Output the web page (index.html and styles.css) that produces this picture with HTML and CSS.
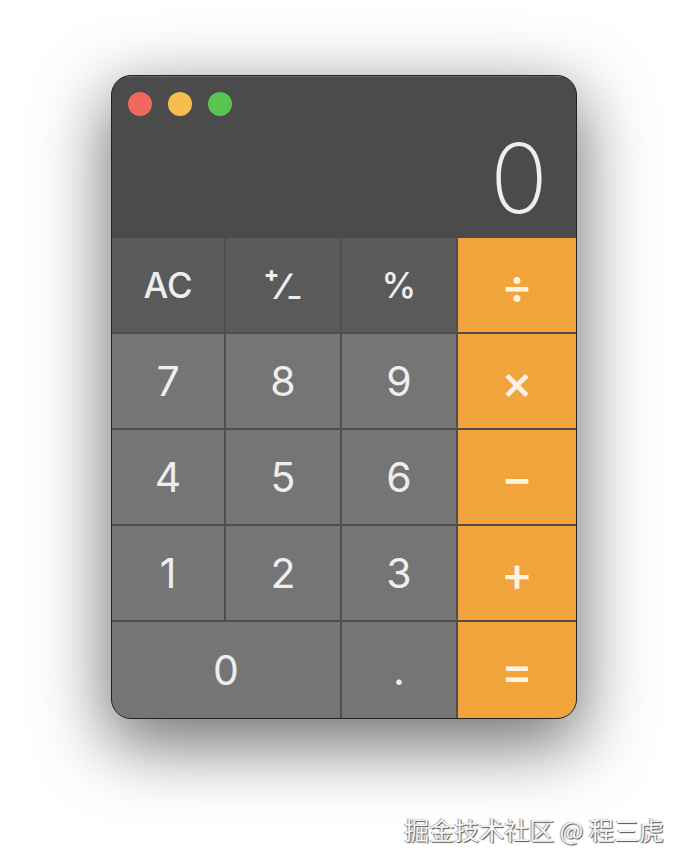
FILE: index.html
```html
<!DOCTYPE html>
<html lang="en">
<head>
    <meta charset="UTF-8">
    <meta name="viewport" content="width=device-width, initial-scale=1.0">
    <title>Calculator</title>
    <link rel="stylesheet" href="styles.css">
</head>
<body>

<div class="calculator">
    <div class="top">
        <div class="lights">
            <span class="light red"></span>
            <span class="light yellow"></span>
            <span class="light green"></span>
        </div>
        <div class="display">0</div>
    </div>
    <div class="keys">
        <button class="key func">AC</button>
        <button class="key func sign">⁺∕₋</button>
        <button class="key func">%</button>
        <button class="key op">÷</button>
        <button class="key">7</button>
        <button class="key">8</button>
        <button class="key">9</button>
        <button class="key op">×</button>
        <button class="key">4</button>
        <button class="key">5</button>
        <button class="key">6</button>
        <button class="key op">−</button>
        <button class="key">1</button>
        <button class="key">2</button>
        <button class="key">3</button>
        <button class="key op">+</button>
        <button class="key zero">0</button>
        <button class="key">.</button>
        <button class="key op">=</button>
    </div>
</div>

<div class="watermark">掘金技术社区 @ 程三虎</div>

</body>
</html>
```

FILE: styles.css
```css
body {
    margin: 0;
    padding: 75px 0 0 111px;
    height: 866px;
    box-sizing: border-box;
    overflow: hidden;
    background-color: #fff;
    font-family: Inter, "Liberation Sans", sans-serif;
}
.calculator {
    width: 466px;
    height: 644px;
    box-sizing: border-box;
    border: 1px solid #222;
    border-radius: 20px;
    overflow: hidden;
    background-color: #4e4e4e;
    box-shadow: 0 22px 70px 4px rgba(0, 0, 0, 0.56);
    display: flex;
    flex-direction: column;
}
.top {
    height: 162px;
    background-color: #4b4b4b;
    box-shadow: inset 0 1px 0 #6a6a6a;
}
.lights {
    display: flex;
    gap: 16px;
    padding: 16px 0 0 16px;
}
.light {
    width: 24px;
    height: 24px;
    border-radius: 50%;
}
.red {
    background-color: #f0675c;
}
.yellow {
    background-color: #f6bd4f;
}
.green {
    background-color: #5ac453;
}
.display {
    color: #eee;
    font-size: 96px;
    font-weight: 200;
    line-height: 100px;
    text-align: right;
    padding-right: 28px;
    margin-top: 12px;
}
.keys {
    flex: 1;
    display: grid;
    grid-template-columns: 112px 114px 114px 1fr;
    grid-template-rows: 94px 94px 94px 94px 1fr;
    gap: 2px;
}
.key {
    border: none;
    padding: 0;
    background-color: #757575;
    color: #eee;
    font-family: inherit;
    font-size: 41px;
    font-weight: 400;
}
.func {
    background-color: #5a5a5a;
    font-size: 35px;
    font-weight: 500;
}
.sign {
    font-size: 37px;
    font-weight: 600;
}
.zero {
    grid-column: span 2;
}
.op {
    background-color: #f2a43c;
    color: #fdf3e3;
    font-size: 48px;
    font-weight: 500;
}
.watermark {
    position: absolute;
    right: 24px;
    bottom: 22px;
    color: #f4f4f4;
    font-family: "Noto Sans CJK SC", sans-serif;
    font-size: 25px;
    line-height: 30px;
    text-shadow: 1px 1px 1px #555, -1px 0 1px #999;
}
```
